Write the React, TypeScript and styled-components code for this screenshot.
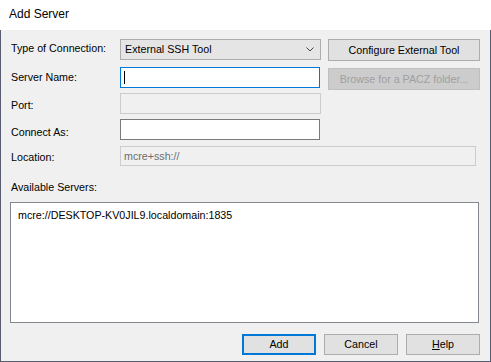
import styled, { createGlobalStyle } from "styled-components";

const GlobalStyle = createGlobalStyle`
  html, body {
    margin: 0;
    padding: 0;
    background: #ffffff;
  }
  * {
    box-sizing: border-box;
  }
`;

const Window = styled.div`
  width: 491px;
  height: 362px;
  display: flex;
  flex-direction: column;
  font-family: "Liberation Sans", Arial, sans-serif;
  font-size: 10.7px;
  color: #000;
`;

const TitleBar = styled.div`
  height: 30px;
  flex: none;
  background: #ffffff;
  display: flex;
  align-items: center;
  padding-left: 9px;
  padding-bottom: 2px;
  font-size: 12px;
  color: #000;
`;

const Body = styled.div`
  flex: 1;
  background: #f0f0f0;
  border: 1px solid #575c70;
  border-top: none;
  padding: 9px 10px 0 9px;
  display: flex;
  flex-direction: column;
`;

const Form = styled.div`
  display: grid;
  grid-template-columns: 110px 200px 160px;
  grid-template-rows: 28px 26px 26px 27px 20px;
`;

const Label = styled.div<{ $dy: number }>`
  padding-top: ${(p) => p.$dy}px;
  padding-left: 1px;
  line-height: 13px;
  white-space: nowrap;
`;

const Field = styled.div<{ $variant?: "normal" | "focus" | "disabled" }>`
  height: 21px;
  width: ${(p) => (p.$variant === "disabled" ? "201px" : "200px")};
  display: flex;
  align-items: center;
  padding-left: 3px;
  background: ${(p) => (p.$variant === "disabled" ? "#f0f0f0" : "#ffffff")};
  border: 1px solid
    ${(p) =>
      p.$variant === "focus" ? "#0078d7" : p.$variant === "disabled" ? "#cccccc" : "#7a7a7a"};
`;

const LocationField = styled.div`
  grid-column: 2 / span 2;
  width: 356px;
  height: 20px;
  display: flex;
  align-items: center;
  padding-left: 3px;
  padding-bottom: 1px;
  border: 1px solid #cccccc;
  color: #6d6d6d;
`;

const Caret = styled.span`
  width: 1px;
  height: 13px;
  background: #000;
`;

const Combo = styled.div`
  width: 201px;
  height: 21px;
  display: flex;
  align-items: center;
  justify-content: space-between;
  padding: 0 6px 1px 4px;
  background: #e5e5e5;
  border: 1px solid #adadad;
`;

const Button = styled.div<{ $disabled?: boolean; $default?: boolean; $width?: number }>`
  width: ${(p) => p.$width ?? 152}px;
  height: ${(p) => (p.$width ? 21 : 22)}px;
  display: flex;
  align-items: center;
  justify-content: center;
  padding-bottom: 1px;
  background: ${(p) => (p.$disabled ? "#cccccc" : "#e1e1e1")};
  border: ${(p) => (p.$default ? "2px solid #0078d7" : p.$disabled ? "1px solid #bfbfbf" : "1px solid #adadad")};
  color: ${(p) => (p.$disabled ? "#a0a0a0" : "#000")};
  white-space: nowrap;
`;

const SideButton = styled(Button)<{ $dy?: number }>`
  margin-left: 8px;
  margin-top: ${(p) => p.$dy ?? 0}px;
`;

const SectionLabel = styled.div`
  margin-top: 15px;
  padding-left: 1px;
  line-height: 13px;
`;

const ServerList = styled.div`
  margin-top: 8px;
  width: 469px;
  height: 121px;
  background: #ffffff;
  border: 1px solid #828790;
  padding: 6px 0 0 7px;
  line-height: 13px;
`;

const ButtonRow = styled.div`
  margin-top: 11px;
  display: flex;
  justify-content: flex-end;
  gap: 8px;
`;

function Chevron() {
  return (
    <svg width="8" height="5" viewBox="0 0 8 5">
      <path d="M0.5 0.5 L4 4 L7.5 0.5" fill="none" stroke="#444" strokeWidth="1" />
    </svg>
  );
}

export default function App() {
  return (
    <>
      <GlobalStyle />
      <Window>
        <TitleBar>Add Server</TitleBar>
        <Body>
          <Form>
            <Label $dy={3}>Type of Connection:</Label>
            <Combo>
              <span>External SSH Tool</span>
              <Chevron />
            </Combo>
            <SideButton>Configure External Tool</SideButton>

            <Label $dy={4}>Server Name:</Label>
            <Field $variant="focus">
              <Caret />
            </Field>
            <SideButton $disabled $dy={1}>
              Browse for a PACZ folder...
            </SideButton>

            <Label $dy={6}>Port:</Label>
            <Field $variant="disabled" />
            <div />

            <Label $dy={7}>Connect As:</Label>
            <Field />
            <div />

            <Label $dy={5}>Location:</Label>
            <LocationField>mcre+ssh://</LocationField>
          </Form>

          <SectionLabel>Available Servers:</SectionLabel>
          <ServerList>mcre://DESKTOP-KV0JIL9.localdomain:1835</ServerList>

          <ButtonRow>
            <Button $default $width={74}>
              Add
            </Button>
            <Button $width={74}>Cancel</Button>
            <Button $width={74}>
              <span>
                <u>H</u>elp
              </span>
            </Button>
          </ButtonRow>
        </Body>
      </Window>
    </>
  );
}
